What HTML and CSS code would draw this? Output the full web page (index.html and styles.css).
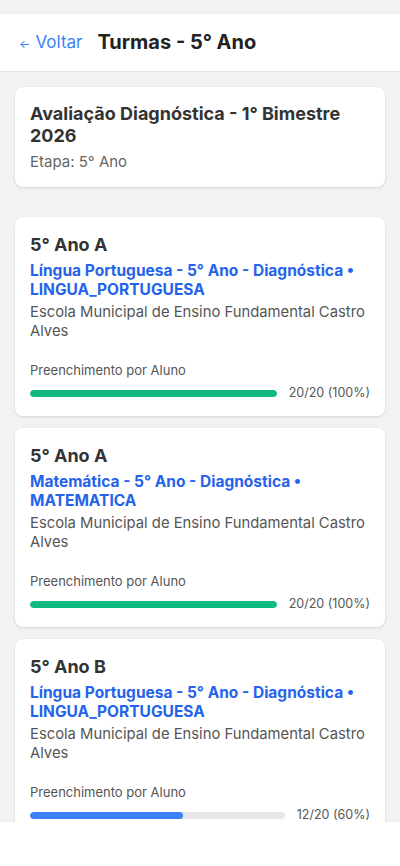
FILE: index.html
```html
<!DOCTYPE html>
<html lang="pt-BR">
<head>
    <meta charset="UTF-8">
    <title>Turmas - 5° Ano</title>
    <link rel="stylesheet" href="styles.css">
</head>
<body>
    <div class="app">
        <div class="status-bar"></div>

        <header class="topbar">
            <a class="back-link" href="#"><span class="arrow">&larr;</span>Voltar</a>
            <h1>Turmas - 5° Ano</h1>
        </header>

        <main class="content">
            <section class="card info-card">
                <h2>Avaliação Diagnóstica - 1° Bimestre 2026</h2>
                <p class="etapa">Etapa: 5° Ano</p>
            </section>

            <div class="turma-list">
                <section class="card turma-card">
                    <h3>5° Ano A</h3>
                    <p class="disciplina">Língua Portuguesa - 5° Ano - Diagnóstica • LINGUA_PORTUGUESA</p>
                    <p class="escola">Escola Municipal de Ensino Fundamental Castro Alves</p>
                    <div class="progress-label">Preenchimento por Aluno</div>
                    <div class="progress-row">
                        <div class="progress-track">
                            <div class="progress-fill done" style="width: 100%"></div>
                        </div>
                        <span class="progress-text">20/20 (100%)</span>
                    </div>
                </section>

                <section class="card turma-card">
                    <h3>5° Ano A</h3>
                    <p class="disciplina">Matemática - 5° Ano - Diagnóstica • MATEMATICA</p>
                    <p class="escola">Escola Municipal de Ensino Fundamental Castro Alves</p>
                    <div class="progress-label">Preenchimento por Aluno</div>
                    <div class="progress-row">
                        <div class="progress-track">
                            <div class="progress-fill done" style="width: 100%"></div>
                        </div>
                        <span class="progress-text">20/20 (100%)</span>
                    </div>
                </section>

                <section class="card turma-card">
                    <h3>5° Ano B</h3>
                    <p class="disciplina">Língua Portuguesa - 5° Ano - Diagnóstica • LINGUA_PORTUGUESA</p>
                    <p class="escola">Escola Municipal de Ensino Fundamental Castro Alves</p>
                    <div class="progress-label">Preenchimento por Aluno</div>
                    <div class="progress-row">
                        <div class="progress-track">
                            <div class="progress-fill partial" style="width: 60%"></div>
                        </div>
                        <span class="progress-text">12/20 (60%)</span>
                    </div>
                </section>
            </div>
        </main>
    </div>
</body>
</html>
```

FILE: styles.css
```css
* {
    box-sizing: border-box;
}
body {
    margin: 0;
    background-color: #fff;
    font-family: 'Inter', 'Noto Sans', sans-serif;
    color: #333;
}
.app {
    height: 822px;
    overflow: hidden;
    background-color: #f2f2f2;
}
.status-bar {
    height: 14px;
}
.topbar {
    height: 58px;
    background-color: #fff;
    border-bottom: 1px solid #e4e4e4;
    display: flex;
    align-items: center;
    gap: 15px;
    padding: 0 19px 1px;
}
.back-link {
    color: #3b82f6;
    text-decoration: none;
    font-size: 17px;
    display: flex;
    align-items: center;
}
.arrow {
    font-size: 12px;
    margin-right: 5px;
    margin-top: 2px;
}
.topbar h1 {
    margin: 0;
    font-size: 20px;
    font-weight: 700;
    color: #222;
}
.content {
    padding: 15px;
}
.card {
    background-color: #fff;
    border-radius: 8px;
    box-shadow: 0 1px 3px rgba(0, 0, 0, 0.12);
    padding: 15px;
}
.info-card {
    padding-top: 16px;
}
.info-card h2 {
    margin: 0;
    font-size: 18px;
    line-height: 22px;
    font-weight: 700;
    color: #333;
}
.etapa {
    margin: 5px 0 0;
    font-size: 15px;
    line-height: 20px;
    color: #666;
}
.turma-list {
    display: flex;
    flex-direction: column;
    gap: 12px;
    margin-top: 30px;
}
.turma-card {
    padding-bottom: 14px;
}
.turma-card h3 {
    margin: 0;
    font-size: 18px;
    line-height: 25px;
    font-weight: 700;
    color: #333;
}
.disciplina {
    margin: 4px 0 0;
    font-size: 15.5px;
    line-height: 19px;
    font-weight: 700;
    color: #2563eb;
}
.escola {
    margin: 4px 0 0;
    font-size: 14.8px;
    line-height: 19px;
    color: #555;
}
.progress-label {
    margin-top: 20px;
    font-size: 13px;
    line-height: 18px;
    color: #555;
}
.progress-row {
    display: flex;
    align-items: center;
    gap: 12px;
    margin-top: 5px;
}
.progress-track {
    flex: 1;
    height: 7px;
    border-radius: 4px;
    background-color: #e5e7eb;
    overflow: hidden;
}
.progress-fill {
    height: 100%;
    border-radius: 4px;
}
.progress-fill.done {
    background-color: #10b981;
}
.progress-fill.partial {
    background-color: #3b82f6;
}
.progress-text {
    font-size: 12.5px;
    line-height: 18px;
    color: #555;
}
```
